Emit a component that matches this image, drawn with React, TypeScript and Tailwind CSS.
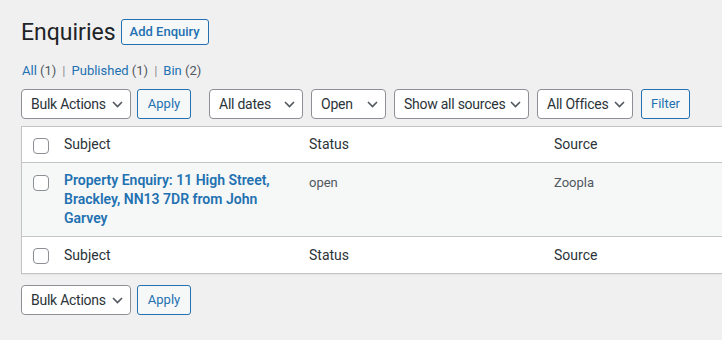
import React from "react"

const font = { fontFamily: "Roboto, 'Liberation Sans', sans-serif" }

const Chevron = () => (
  <svg className="w-[11px] h-[7px] text-[#50575e] shrink-0" viewBox="0 0 11 7" fill="none">
    <path d="M1 1l4.5 4.5L10 1" stroke="currentColor" strokeWidth={1.6} />
  </svg>
)

type SelectProps = { label: string; width: string }

const FakeSelect = ({ label, width }: SelectProps) => (
  <div
    className={`${width} h-[30px] flex items-center justify-between pl-[9px] pr-[7px] border border-[#8c8f94] rounded-[4px] bg-white text-[14px] text-[#2c3338] shrink-0`}
  >
    <span className="whitespace-nowrap tracking-[-0.25px]">{label}</span>
    <Chevron />
  </div>
)

const Button = ({ label, width }: { label: string; width: string }) => (
  <div
    className={`${width} h-[30px] flex items-center justify-center border border-[#2271b1] rounded-[3px] bg-[#f6f7f7] text-[13px] text-[#2271b1] shrink-0`}
  >
    {label}
  </div>
)

const Checkbox = () => (
  <div className="w-4 h-4 border border-[#8c8f94] rounded-[4px] bg-white" />
)

const BulkRow = () => (
  <div className="flex items-center gap-[6px]">
    <FakeSelect label="Bulk Actions" width="w-[110px]" />
    <Button label="Apply" width="w-[54px]" />
  </div>
)

const cols = "grid grid-cols-[32px_245px_245px_245px]"

const HeaderRow = ({ border }: { border: string }) => (
  <div className={`${cols} h-[36px] bg-white ${border} border-[#c3c4c7] text-[14px] text-[#2c3338]`}>
    <div className="pl-[11px] pt-[11px]">
      <Checkbox />
    </div>
    <div className="pl-[10px] flex items-center">Subject</div>
    <div className="pl-[10px] flex items-center">Status</div>
    <div className="pl-[10px] flex items-center">Source</div>
  </div>
)

export default function App() {
  return (
    <div className="w-[722px] h-[340px] overflow-hidden bg-[#f0f0f1] pl-[21px] pt-[18px]" style={font}>
      <div className="flex items-start">
        <h1 className="text-[23px] leading-[30px] font-normal text-[#1d2327]">Enquiries</h1>
        <div className="ml-[5px] mt-[1px] h-[26px] px-[8px] flex items-center border border-[#2271b1] rounded-[3px] bg-[#f6f7f7] text-[13px] font-medium text-[#2271b1]">
          Add Enquiry
        </div>
      </div>

      <div className="mt-[13px] leading-[20px] text-[13px] text-[#50575e] pl-[1px]">
        <span className="text-[#2271b1]">All</span> (1)
        <span className="mx-[6px] text-[#8c8f94]">|</span>
        <span className="text-[#2271b1]">Published</span> (1)
        <span className="mx-[6px] text-[#8c8f94]">|</span>
        <span className="text-[#2271b1]">Bin</span> (2)
      </div>

      <div className="mt-[8px] flex items-center">
        <BulkRow />
        <div className="ml-[18px] flex items-center gap-[8px]">
          <FakeSelect label="All dates" width="w-[94px]" />
          <FakeSelect label="Open" width="w-[75px]" />
          <FakeSelect label="Show all sources" width="w-[135px]" />
          <FakeSelect label="All Offices" width="w-[96px]" />
          <Button label="Filter" width="w-[49px]" />
        </div>
      </div>

      <div className="mt-[7px] w-[769px] border border-[#c3c4c7] bg-white shadow-[0_1px_1px_rgba(0,0,0,0.04)]">
        <HeaderRow border="border-b" />
        <div className={`${cols} h-[74px] bg-[#f6f7f7] border-b border-[#c3c4c7] text-[13px] text-[#50575e]`}>
          <div className="pl-[11px] pt-[12px]">
            <Checkbox />
          </div>
          <div className="pl-[10px] pr-[10px] pt-[8px] text-[14px] leading-[19px] font-semibold text-[#2271b1]">
            Property Enquiry: 11 High Street, Brackley, NN13 7DR from John Garvey
          </div>
          <div className="pl-[10px] pt-[10px] leading-[19px]">open</div>
          <div className="pl-[10px] pt-[10px] leading-[19px]">Zoopla</div>
        </div>
        <HeaderRow border="" />
      </div>

      <div className="mt-[11px]">
        <BulkRow />
      </div>
    </div>
  )
}
